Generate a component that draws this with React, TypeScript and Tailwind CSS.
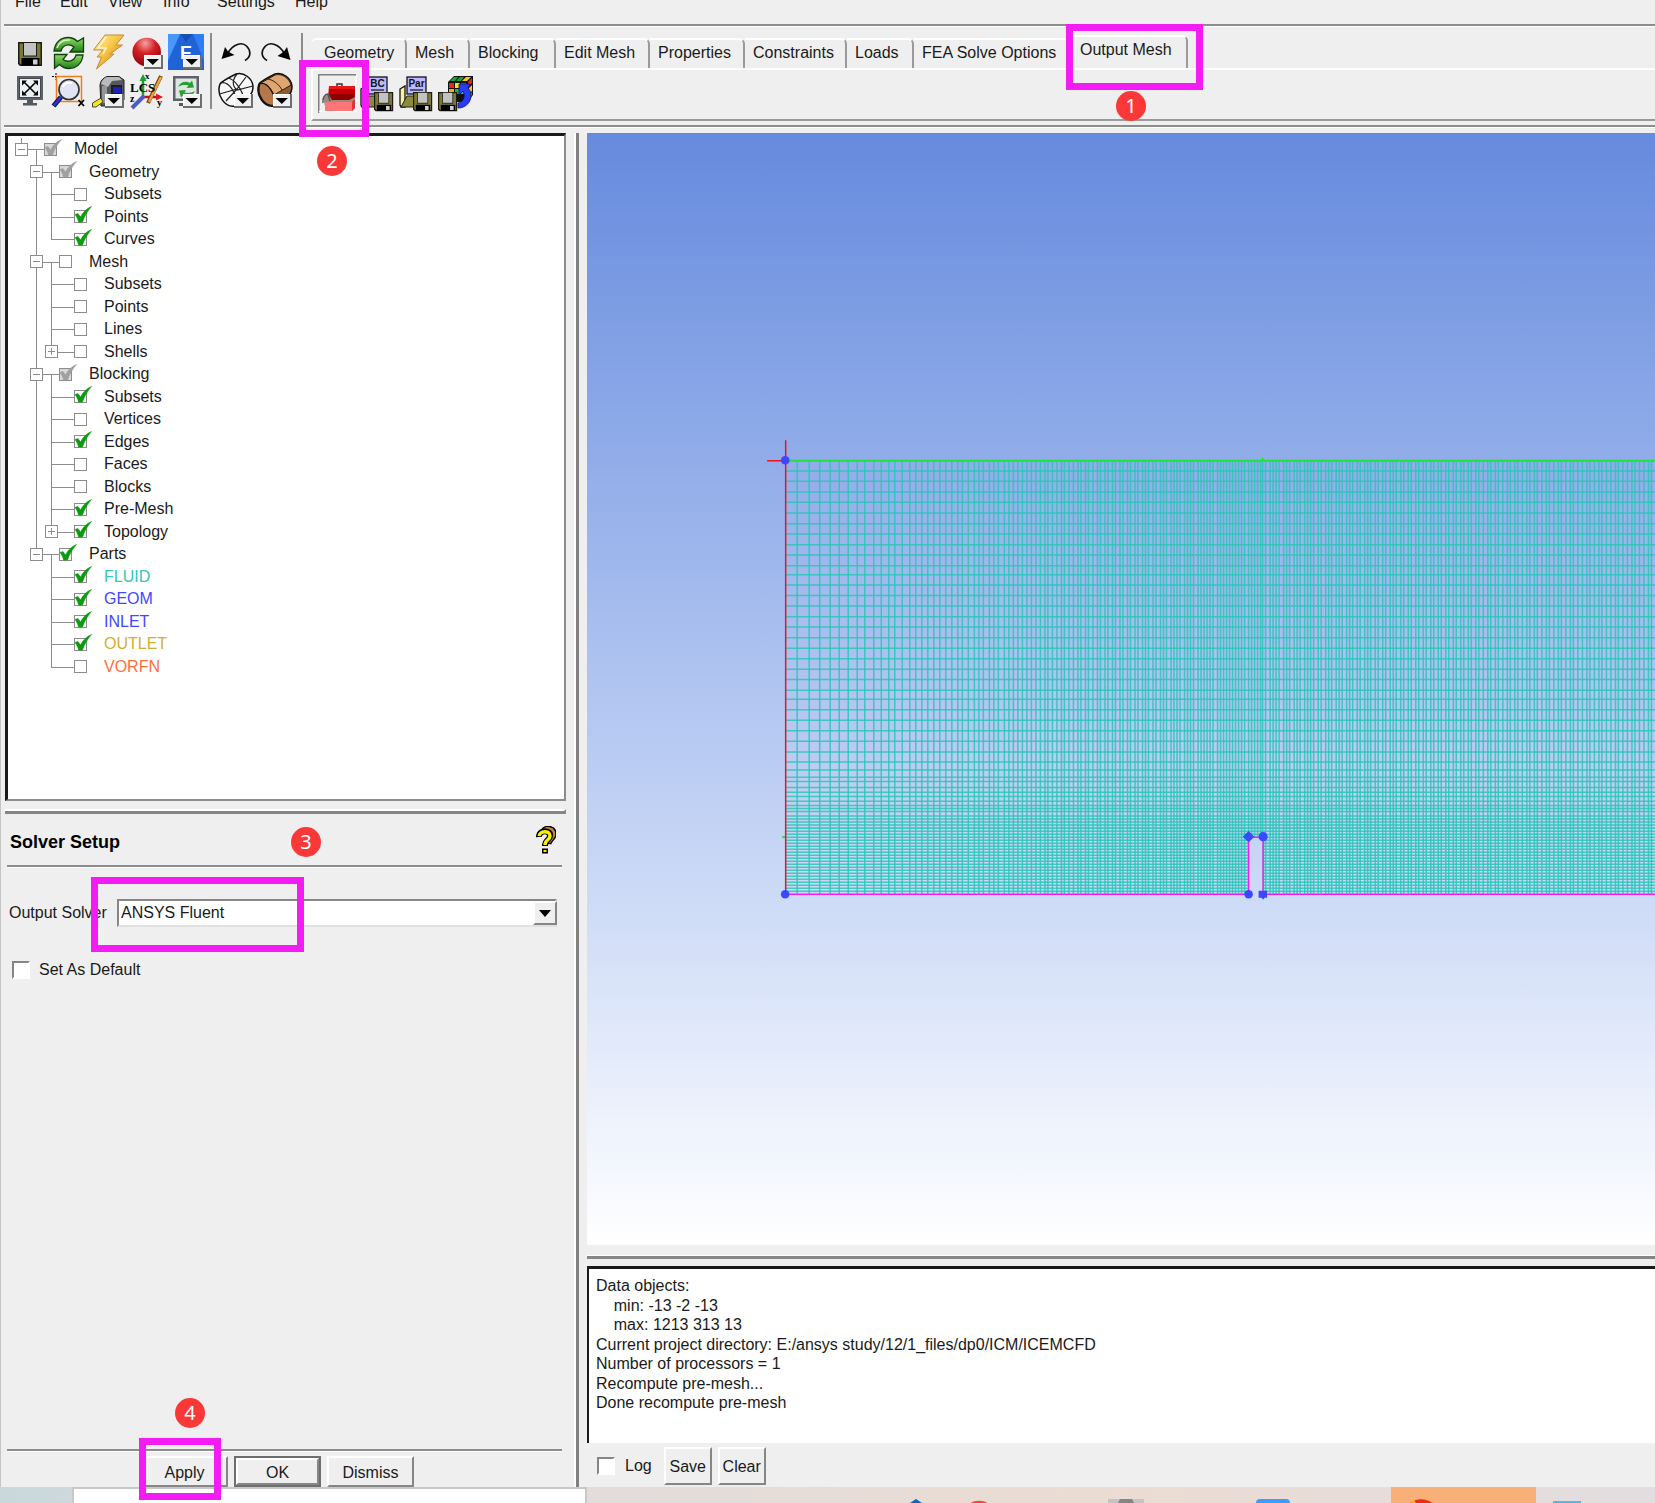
import type { ReactNode } from 'react';

/* ---------- toolbar drawings ---------- */

function Icon({ children }: { children: ReactNode }) {
  return (
    <svg viewBox="0 0 39 39" className="block size-[39px]" aria-hidden="true">
      {children}
    </svg>
  );
}

function DropBadge({ x = 17, y = 22 }: { x?: number; y?: number }) {
  return (
    <g transform={`translate(${x} ${y})`}>
      <rect width="19" height="14" fill="#6e6e6e" />
      <rect width="17" height="12" fill="#fff" />
      <rect x="1" y="1" width="16" height="11" fill="#f0f0f0" />
      <path d="M2.5 4H15L8.8 10Z" fill="#000" />
    </g>
  );
}

function Floppy({ x, y, s = 1 }: { x: number; y: number; s?: number }) {
  return (
    <g transform={`translate(${x} ${y}) scale(${s})`}>
      <path d="M0 0H24V24H2L0 22Z" fill="#1c1c10" />
      <path d="M1.5 1.5H22.5V22.5H3L1.5 21Z" fill="#7c7a3a" />
      <rect x="5" y="0.5" width="14" height="14" fill="#1c1c10" />
      <rect x="6" y="1" width="12" height="12.5" fill="#c3c3c3" />
      <rect x="3.5" y="16" width="18" height="7.5" fill="#000" />
      <rect x="15" y="17.5" width="4.5" height="5" fill="#d0d0d0" />
    </g>
  );
}

const SaveIcon = () => (
  <Icon>
    <Floppy x={8} y={9} />
  </Icon>
);

const RefreshIcon = () => (
  <Icon>
    <defs>
      <linearGradient id="rg" x1="0" y1="0" x2="0" y2="1">
        <stop offset="0" stopColor="#8fdc6a" />
        <stop offset="1" stopColor="#1f7d16" />
      </linearGradient>
    </defs>
    <path d="M5 18C6 9 12 4.500 19 4.500C23 4.500 26 6 28.500 8.500L34.500 5V19H21L25 14C20 10 13.500 12 12 18Z" fill="url(#rg)" stroke="#123f0c" strokeWidth="1.300" />
    <path d="M34 22C33 31 27 35.500 20 35.500C16 35.500 13 34 10.500 31.500L5.500 35.500V21.500H18L14 26.500C19 30 25.500 28 27 22Z" fill="url(#rg)" stroke="#123f0c" strokeWidth="1.300" />
    <path d="M8 15C10 9 15 6.500 21 7" stroke="#d4f7bd" strokeWidth="1.500" fill="none" />
  </Icon>
);

const BoltIcon = () => (
  <Icon>
    <defs>
      <linearGradient id="bg" x1="0" y1="0" x2="1" y2="1">
        <stop offset="0" stopColor="#fff3b0" />
        <stop offset="0.450" stopColor="#f9c542" />
        <stop offset="1" stopColor="#c96a14" />
      </linearGradient>
    </defs>
    <path d="M17 2H36L28 12H34.500L22 21H26L8.500 36L13.500 24H9L15 17H5.500Z" fill="url(#bg)" stroke="#c98a2e" strokeWidth="1" />
    <path d="M18 4L10 15H18L15 21" stroke="#fff6cf" strokeWidth="1.500" fill="none" />
  </Icon>
);

const StopIcon = () => (
  <Icon>
    <defs>
      <radialGradient id="sg" cx="0.450" cy="0.200" r="0.800">
        <stop offset="0" stopColor="#f7a0a0" />
        <stop offset="0.450" stopColor="#d41f24" />
        <stop offset="1" stopColor="#8e0508" />
      </radialGradient>
    </defs>
    <circle cx="19.700" cy="19" r="14.300" fill="url(#sg)" />
    <DropBadge />
  </Icon>
);

const EIcon = () => (
  <Icon>
    <rect x="2" y="1" width="36" height="36" fill="#2f7df0" />
    <path d="M14 1H27L38 28V37H2V28Z" fill="#1f63d6" />
    <path d="M14 1L2 27V1Z" fill="#4a97fb" />
    <path d="M14 1L20 9L27 1Z" fill="#1851b4" />
    <text x="14" y="26" fontFamily="Liberation Sans, sans-serif" fontWeight="bold" fontSize="18" fill="#fff">E</text>
    <DropBadge />
  </Icon>
);

const UndoIcon = () => (
  <Icon>
    <path d="M11 20C16 11 25 8.500 29.500 13C34 17.500 34.500 23.500 28 27.500" stroke="#111" strokeWidth="1.700" fill="none" />
    <path d="M4.500 26L8 14L11 18.500L17.500 22Z" fill="#000" />
  </Icon>
);

const RedoIcon = () => (
  <Icon>
    <path d="M28 20C23 11 14 8.500 9.500 13C5 17.500 4.500 23.500 11 27.500" stroke="#111" strokeWidth="1.700" fill="none" />
    <path d="M34.500 27L31 14L28 18.500L21.500 23Z" fill="#000" />
  </Icon>
);

const FitIcon = () => (
  <Icon>
    <rect x="7" y="4" width="26" height="24" fill="#5d6169" />
    <rect x="9.500" y="6.500" width="21" height="19" fill="#eceff2" stroke="#2e3136" strokeWidth="0.800" />
    <path d="M14 10L26 22M26 10L14 22" stroke="#000" strokeWidth="1.600" />
    <path d="M12 8.500H17L12 13.500ZM28 8.500V13.500L23 8.500ZM12 23.500V18.500L17 23.500ZM28 23.500H23L28 18.500Z" fill="#000" />
    <path d="M17 28H23V31H27V33.500H13V31H17Z" fill="#555960" />
  </Icon>
);

const ZoomIcon = () => (
  <Icon>
    <path d="M7 1V8M3 4.500H12" stroke="#000" strokeWidth="1" strokeDasharray="2 1" />
    <rect x="7.500" y="4.500" width="25" height="25" fill="none" stroke="#ef7d1c" strokeWidth="1.500" />
    <path d="M12 25L4.500 34" stroke="#151547" strokeWidth="5" />
    <path d="M12 25L5 33.500" stroke="#2a35e8" strokeWidth="2.500" />
    <circle cx="20" cy="17.500" r="10" fill="#dfe3f4" fillOpacity="0.950" stroke="#333" strokeWidth="1.700" />
    <path d="M14 15C15 11 19 10 23 11" stroke="#fff" strokeWidth="2" fill="none" />
    <path d="M29.500 28L35 34M35 28L29.500 34" stroke="#000" strokeWidth="1.800" />
  </Icon>
);

const MeasureIcon = () => (
  <Icon>
    <path d="M12 14C12 9 15 6 19 4.500H31L36 8V28L30 34H13Z" fill="#56595c" stroke="#222" strokeWidth="1" />
    <path d="M13 12C14 8 16 6 19 5H31L34 8L24 9L20 15Z" fill="#b8bbbd" />
    <path d="M14 14H19V31H14Z" fill="#93979a" />
    <rect x="23" y="13" width="11" height="9" fill="#1a1a2c" />
    <rect x="25" y="15" width="8" height="6" fill="#1d23b8" />
    <path d="M13 26L4.500 31V35H8L15 30Z" fill="#f5e420" stroke="#333" strokeWidth="0.900" />
    <DropBadge />
  </Icon>
);

const LcsIcon = () => (
  <Icon>
    <path d="M16 25V5" stroke="#18a22c" strokeWidth="2.500" />
    <path d="M12.500 9L16 2L19.500 9Z" fill="#18a22c" />
    <path d="M16 25H31" stroke="#c51320" strokeWidth="2.500" />
    <path d="M29 21.500L36 25L29 28.500Z" fill="#e01b28" />
    <path d="M17 24L5 36" stroke="#4c59c8" strokeWidth="4" />
    <path d="M34 4L21 31" stroke="#7d4310" strokeWidth="4" />
    <path d="M34 5L22 30" stroke="#f2a43c" strokeWidth="2.300" />
    <g fontFamily="Liberation Serif, serif" fontWeight="bold" fill="#000">
      <text x="3" y="20" fontSize="13">LCS</text>
      <text x="18" y="7" fontSize="9">x</text>
      <text x="30" y="34" fontSize="10">y</text>
      <text x="3" y="30" fontSize="10">z</text>
    </g>
  </Icon>
);

const RedrawIcon = () => (
  <Icon>
    <rect x="7" y="4" width="26" height="25" fill="#5d6169" />
    <rect x="9.500" y="6.500" width="21" height="20" fill="#dfe5e2" />
    <path d="M12 15C14 10 20 8.500 24 11L26 8.500L28 15.500L20.500 16L22.500 13.500C19 12.500 15 13 12 15Z" fill="#26a12f" />
    <path d="M29 19C27 24 21 25.500 17 23L15 25.500L13 18.500L20 18L18.500 20.500C22 21.500 26 21 29 19Z" fill="#26a12f" />
    <path d="M17 29H22V31H25V34H13V31H17Z" fill="#555960" />
    <DropBadge />
  </Icon>
);

const WireframeIcon = () => (
  <Icon>
    <path d="M3 12C5 9 15 4 19 2C27 0 35 6 36 14C36 19 35 21 33 23L18 34C8 36 -1 23 3 12Z" fill="#f7f7f7" stroke="#111" strokeWidth="1.500" />
    <path d="M4 11C11 9 21 21 19 34M20 2C15 8 15 14 20 18L36 14M11 6C17 7 25 17 27 27M2.500 22L20 17L29 5M9 29L20 17" stroke="#222" strokeWidth="1.200" fill="none" />
    <DropBadge />
  </Icon>
);

const SolidIcon = () => (
  <Icon>
    <path d="M3 12C5 9 15 4 19 2C27 0 35 6 36 14C36 19 35 21 33 23L18 34C8 36 -1 23 3 12Z" fill="#8f5a30" stroke="#111" strokeWidth="1.500" />
    <path d="M5 11L19 3C26 1 33 6 35 13L18 23C15 16 10 12 5 11Z" fill="#dfa672" stroke="#33200f" strokeWidth="1" />
    <path d="M4 11.500C12 10 20 22 18 33C9 35 0 23 4 11.500Z" fill="#b57848" stroke="#111" strokeWidth="1.200" />
    <path d="M12 7C17 8 23 12 26 18" stroke="#33200f" strokeWidth="1" fill="none" />
    <DropBadge />
  </Icon>
);

const ToolboxIcon = () => (
  <Icon>
    <path d="M0 39V0H38" fill="none" stroke="#808080" strokeWidth="3" />
    <path d="M1 37.500H38V2" fill="none" stroke="#fff" strokeWidth="1.500" />
    <path d="M19 12V10H24V12" stroke="#333" strokeWidth="1.500" fill="none" />
    <path d="M11 12H37V26L34 28H12L10 24Z" fill="#c80000" />
    <path d="M12 20H36V26L33 28H14Z" fill="#8e0000" />
    <path d="M11 12H37V15H11Z" fill="#e41a1a" />
    <path d="M5 24L10 20L14 26H31L37 23V29L33 32H7Z" fill="#9a8a82" />
    <path d="M5 29C4 24 7 20 10 20L12 27" fill="none" stroke="#555" strokeWidth="1.500" />
    <path d="M7 28H34L37 25V34L34 37H7Z" fill="#ff7676" />
    <path d="M34 28L37 25V34L34 37Z" fill="#e03434" />
  </Icon>
);

function FolderSave({ label }: { label: string }) {
  return (
    <Icon>
      <path d="M5 15L10 12V33H6L5 31Z" fill="#f5f2a0" stroke="#111" strokeWidth="1.300" />
      <path d="M6 33L12 22H25V33Z" fill="#8d8a3a" stroke="#222" strokeWidth="1" />
      <rect x="12" y="3" width="19" height="17" fill="#bcb8ff" stroke="#111" strokeWidth="1.300" />
      <text x="21.500" y="13" textAnchor="middle" fontFamily="Liberation Sans, sans-serif" fontWeight="bold" fontSize="10" fill="#111">{label}</text>
      <path d="M15 16H28" stroke="#111" strokeWidth="1.200" />
      <Floppy x={18} y={18} s={0.8} />
    </Icon>
  );
}

const CubeIcon = () => (
  <Icon>
    <path d="M14 8L20 2H39V21L33 28H14Z" fill="#111" />
    <g transform="translate(0 -1)">
      <rect x="15" y="10" width="5" height="5" fill="#e52a12" />
      <rect x="21" y="10" width="5" height="5" fill="#f3e21b" />
      <rect x="27" y="10" width="5" height="5" fill="#24b63a" />
      <rect x="15" y="16" width="5" height="5" fill="#f3b21b" />
      <rect x="21" y="16" width="5" height="5" fill="#24b63a" />
      <rect x="27" y="16" width="5" height="5" fill="#19b4b8" />
      <rect x="15" y="22" width="5" height="5" fill="#24b63a" />
      <path d="M16 8L20 4H24L21 8ZM22 8L26 4H30L27 8Z" fill="#19a23c" />
      <path d="M28 8L32 4H37L33 8Z" fill="#f3c81b" />
      <path d="M34 9L38 5V10L34 14Z" fill="#e52a12" />
      <path d="M34 16L38 12V18L34 21Z" fill="#f3c81b" />
      <path d="M34 23L38 19V22L34 27Z" fill="#24b63a" />
    </g>
    <path d="M24 34C35 34 41 22 34 14L36 10H25V21L29 17C32 23 29 28 24 29Z" fill="#2b3cf5" stroke="#0a0f66" strokeWidth="0.800" />
    <Floppy x={4} y={18} s={0.8} />
  </Icon>
);

const HelpIcon = () => (
  <svg viewBox="0 0 20 28" className="block h-7 w-5" aria-hidden="true">
    <path d="M7 5C9 0 18.500 1 18.500 8C18.500 13 14 13 13 18" fill="none" stroke="#000" strokeWidth="4.500" />
    <path d="M7 5C9 0.500 18 1.500 18 8C18 13 14 13 13 17" fill="none" stroke="#c9823c" strokeWidth="2.500" />
    <path d="M3 11C2.500 4 14 3 14 10C14 14 9 13.500 9 20" fill="none" stroke="#000" strokeWidth="6" />
    <path d="M3.200 10C3.500 4.500 14 4 14 10C14 14 9 13.500 9 19" fill="none" stroke="#f8f000" strokeWidth="3.400" />
    <rect x="6" y="22.500" width="6" height="5" fill="#000" />
    <rect x="7.500" y="24" width="3" height="2" fill="#f8f000" />
  </svg>
);

/* ---------- call-outs ---------- */

const Badge = ({ n, className }: { n: number; className: string }) => (
  <span className={`absolute z-20 flex size-[30px] items-center justify-center rounded-full bg-[#fb3838] font-['Noto_Sans'] text-[20px] leading-none text-white ${className}`}>
    {n}
  </span>
);

const Mark = ({ className }: { className: string }) => (
  <span className={`pointer-events-none absolute z-10 border-[7px] border-[#f41cf4] ${className}`} />
);

/* ---------- model tree ---------- */

type Row = {
  label: string;
  level: 0 | 1 | 2;
  check: 'on' | 'off' | 'mixed';
  sign?: '-' | '+';
  last?: boolean;
  trunk?: boolean;
  tone?: string;
};

const rows: Row[] = [
  { label: 'Model', level: 0, check: 'mixed', sign: '-', last: true },
  { label: 'Geometry', level: 1, check: 'mixed', sign: '-' },
  { label: 'Subsets', level: 2, check: 'off', trunk: true },
  { label: 'Points', level: 2, check: 'on', trunk: true },
  { label: 'Curves', level: 2, check: 'on', trunk: true, last: true },
  { label: 'Mesh', level: 1, check: 'off', sign: '-' },
  { label: 'Subsets', level: 2, check: 'off', trunk: true },
  { label: 'Points', level: 2, check: 'off', trunk: true },
  { label: 'Lines', level: 2, check: 'off', trunk: true },
  { label: 'Shells', level: 2, check: 'off', trunk: true, sign: '+', last: true },
  { label: 'Blocking', level: 1, check: 'mixed', sign: '-' },
  { label: 'Subsets', level: 2, check: 'on', trunk: true },
  { label: 'Vertices', level: 2, check: 'off', trunk: true },
  { label: 'Edges', level: 2, check: 'on', trunk: true },
  { label: 'Faces', level: 2, check: 'off', trunk: true },
  { label: 'Blocks', level: 2, check: 'off', trunk: true },
  { label: 'Pre-Mesh', level: 2, check: 'on', trunk: true },
  { label: 'Topology', level: 2, check: 'on', trunk: true, sign: '+', last: true },
  { label: 'Parts', level: 1, check: 'on', sign: '-', last: true },
  { label: 'FLUID', level: 2, check: 'on', tone: 'text-[#34c6b8]' },
  { label: 'GEOM', level: 2, check: 'on', tone: 'text-[#4048ff]' },
  { label: 'INLET', level: 2, check: 'on', tone: 'text-[#4048ff]' },
  { label: 'OUTLET', level: 2, check: 'on', tone: 'text-[#d0b030]' },
  { label: 'VORFN', level: 2, check: 'off', tone: 'text-[#ff7038]', last: true },
];

const line = 'absolute bg-[#8c8c8c]';

function TreeRow({ row }: { row: Row }) {
  const { level, sign, last, trunk, check, label, tone } = row;
  return (
    <li className="flex flex-1 items-center">
      {level > 0 && <span className="w-[15px]" />}
      {level > 1 && (
        <span className="relative w-[15px] self-stretch">
          {trunk && <span className={`${line} left-[7px] h-full w-px`} />}
        </span>
      )}
      <span className="relative flex w-[15px] items-center justify-center self-stretch">
        <span className={`${line} top-0 left-[7px] w-px ${last ? 'h-1/2' : 'h-full'}`} />
        <span className={`${line} top-1/2 left-[7px] h-px w-2`} />
        {sign && (
          <button
            aria-label={`${sign === '-' ? 'Collapse' : 'Expand'} ${label}`}
            className="relative size-[13px] border border-[#8c8c8c] bg-white"
          >
            <span className={`${line} top-[5px] left-[2px] h-px w-[7px]`} />
            {sign === '+' && <span className={`${line} top-[2px] left-[5px] h-[7px] w-px`} />}
          </button>
        )}
      </span>
      <span className="relative w-[15px] self-stretch">
        <span className={`${line} top-1/2 left-0 h-px w-full`} />
        {sign === '-' && <span className={`${line} top-1/2 left-[7px] h-1/2 w-px`} />}
      </span>
      <label className="flex items-center">
        <span className="relative mr-[17px] size-[13px]">
          <input
            type="checkbox"
            defaultChecked={check !== 'off'}
            className={`block size-[13px] appearance-none border border-[#8c8c8c] ${check === 'mixed' ? 'bg-[#d8d8d8]' : 'bg-white'}`}
          />
          {check !== 'off' && (
            <svg viewBox="0 0 18 17" className="absolute bottom-0 left-0 h-[17px] w-[18px]" aria-hidden="true">
              <path
                d="M1 8.500L4 7.500L6.500 11C9 6 12.500 2.500 17.500 0.500C13.500 5 10.500 10 8.500 16H4.500C4 13 2.500 10.500 1 8.500Z"
                fill={check === 'on' ? '#0a9c0e' : '#a0a0a0'}
                stroke={check === 'on' ? '#0a9c0e' : '#a0a0a0'}
                strokeWidth="0.600"
              />
            </svg>
          )}
        </span>
        <span className={tone ?? 'text-[#1a1a1a]'}>{label}</span>
      </label>
    </li>
  );
}

/* ---------- mesh view ---------- */

const CELL = 1.5;
const snap = (v: number) => Math.round(v / CELL) * CELL;

function meshColumns() {
  const steps = [
    0, 8, 8, 7, 7, 6, 6, 6, 5, 6, 5, 5, 4, 5, 5, 4, 4, 4, 4, 4, 4, 4, 4, 3, 4, 4, 3, 3, 4, 3, 3, 4, 3, 3, 3, 3, 3, 3, 3, 3,
    3, 2, 3, 3,
  ];
  const out: number[] = [];
  let x = 198;
  for (const s of steps) {
    x += s * CELL;
    out.push(x);
  }
  while (x < 656) {
    x += 4.1 - ((x - 470) / 190) * 1.1;
    out.push(snap(x));
  }
  out.push(661, 664, 667, 670, 673, 675);
  x = 675;
  while (x < 1068) {
    x += 3.4 + ((x - 675) / 393) * 0.8;
    out.push(snap(x));
  }
  return out;
}

function meshRows() {
  const marks = [
    125, 156, 188, 219, 251, 283, 314, 346, 377, 409, 436, 467, 498, 530, 562, 593, 625, 656, 688, 719, 750, 782, 809,
    841, 872, 904, 935, 967, 997, 1021, 1043, 1056, 1074, 1088, 1101, 1115, 1128, 1137, 1146,
  ];
  const out = marks.map((m) => 296 + m / 3);
  for (let y = 682.5; y < 760; y += 3) out.push(y);
  return out;
}

const columns = meshColumns();
const lines = meshRows();

function MeshView() {
  return (
    <svg viewBox="0 0 1068 1111" preserveAspectRatio="xMinYMin slice" className="absolute inset-0 h-full w-full" role="img" aria-label="Mesh">
      <clipPath id="fluid">
        <path clipRule="evenodd" d="M198 327H1068V761H198ZM661 703H675V761H661Z" />
      </clipPath>
      <g clipPath="url(#fluid)" stroke="#2cc4b8" strokeWidth="1.500">
        <path d={columns.map((x) => `M${x} 327V761`).join('')} strokeOpacity="0.850" />
        <path d={lines.map((y) => `M198 ${y}H1068`).join('')} strokeOpacity="0.850" />
      </g>
      <path d="M198 327.500H1068" stroke="#22e040" strokeWidth="2" />
      <path d="M674 325.500H676" stroke="#00ff00" strokeWidth="2" />
      <path d="M195 703.500H198" stroke="#22e040" strokeWidth="2" />
      <path d="M198.500 307V761M180 327.500H198" stroke="#ee1122" strokeWidth="1.500" />
      <path d="M198 760.500H661V703.500H675.500V760.500H1068" fill="none" stroke="#f41cf4" strokeWidth="1.500" />
      <g fill="#3c48ff">
        <circle cx="198" cy="327" r="4.300" />
        <circle cx="198" cy="760.500" r="4.300" />
        <path d="M656 703L661 698L666 703L661 708Z" stroke="#3c48ff" />
        <circle cx="675.500" cy="703" r="4.600" />
        <circle cx="661" cy="760.500" r="4.300" />
        <path d="M671 757H679.500V764H677L675.500 766L674 764H671Z" />
      </g>
    </svg>
  );
}

/* ---------- page ---------- */

const menu: [string, string][] = [
  ['File', 'w-[45px]'],
  ['Edit', 'w-12'],
  ['View', 'w-[55px]'],
  ['Info', 'w-[54px]'],
  ['Settings', 'w-[78px]'],
  ['Help', 'w-12'],
];

const tabs: [string, string][] = [
  ['Geometry', 'w-24 pl-[13px]'],
  ['Mesh', 'w-[63px] pl-2'],
  ['Blocking', 'w-[86px] pl-2'],
  ['Edit Mesh', 'w-[94px] pl-2'],
  ['Properties', 'w-[95px] pl-2'],
  ['Constraints', 'w-[102px] pl-2'],
  ['Loads', 'w-[67px] pl-2'],
  ['FEA Solve Options', 'w-[154px] pl-2'],
];

const mainTools: [string, () => ReactNode][][] = [
  [
    ['Save', SaveIcon],
    ['Refresh', RefreshIcon],
    ['Run', BoltIcon],
    ['Stop', StopIcon],
    ['Export', EIcon],
  ],
  [
    ['Fit window', FitIcon],
    ['Box zoom', ZoomIcon],
    ['Measure', MeasureIcon],
    ['Local coordinates', LcsIcon],
    ['Redraw', RedrawIcon],
  ],
];

const viewTools: [string, () => ReactNode][][] = [
  [
    ['Undo', UndoIcon],
    ['Redo', RedoIcon],
  ],
  [
    ['Wireframe', WireframeIcon],
    ['Solid', SolidIcon],
  ],
];

function ToolGrid({ tools }: { tools: [string, () => ReactNode][][] }) {
  return (
    <div>
      {tools.map((r, i) => (
        <div key={i} className="flex">
          {r.map(([name, Glyph]) => (
            <button key={name} aria-label={name}>
              <Glyph />
            </button>
          ))}
        </div>
      ))}
    </div>
  );
}

const raised = 'border-2 border-t-white border-l-white border-r-[#868686] border-b-[#868686] bg-[#efefef]';
const sunkenBox =
  'appearance-none border-2 border-t-[#868686] border-l-[#868686] border-r-white border-b-white bg-white size-[18px]';
const rule = 'h-[3px] border-t-2 border-b border-t-[#8c8c8c] border-b-white';

const log = [
  'Data objects:',
  '    min: -13 -2 -13',
  '    max: 1213 313 13',
  'Current project directory: E:/ansys study/12/1_files/dp0/ICM/ICEMCFD',
  'Number of processors = 1',
  'Recompute pre-mesh...',
  'Done recompute pre-mesh',
];

export default function App() {
  return (
    <div className="flex h-screen flex-col overflow-hidden bg-[#efefef] font-['Liberation_Sans',Arial,sans-serif] text-[16px] leading-5 text-[#1a1a1a]">
      <div className="flex min-h-0 flex-1 flex-col border-l border-[#c4c4c4]">
        <nav className="flex h-6 shrink-0 items-start overflow-hidden pl-[14px]">
          {menu.map(([name, width]) => (
            <button key={name} className={`-mt-2 shrink-0 text-left ${width}`}>
              {name}
            </button>
          ))}
        </nav>
        <div className={`ml-[3px] shrink-0 ${rule}`} />

        <header className="flex h-[98px] shrink-0">
          <div className="flex pt-[6px] pl-[9px]">
            <ToolGrid tools={mainTools} />
            <div className="mx-[5px] h-[76px] w-[2px] bg-[#8c8c8c]" />
            <ToolGrid tools={viewTools} />
            <div className="ml-[6px] h-[76px] w-[2px] bg-[#8c8c8c]" />
          </div>
          <div className="ml-2 flex min-w-0 flex-1 flex-col pt-2">
            <div className="flex h-[33px] shrink-0 items-end">
              {tabs.map(([name, look], i) => (
                <button
                  key={name}
                  className={`h-[30px] shrink-0 border-t-2 border-white pb-[2px] text-left whitespace-nowrap ${look} ${
                    i < 7 ? 'rounded-tr-md border-r-2 border-r-[#9a9a9a]' : ''
                  } ${i === 0 ? 'rounded-tl-md' : ''}`}
                >
                  {name}
                </button>
              ))}
              <div className="relative">
                <button className="h-[33px] w-[120px] rounded-tr-md border-t-2 border-r-2 border-t-white border-r-[#9a9a9a] pb-[6px] pl-[12px] text-left whitespace-nowrap">
                  Output Mesh
                </button>
                <Mark className="-top-[11px] -left-[2px] h-[66px] w-[137px]" />
                <Badge n={1} className="top-[56px] left-[48px]" />
              </div>
            </div>
            <div className="flex h-[53px] shrink-0 border-t-2 border-b-2 border-l-2 border-t-white border-b-[#9a9a9a] border-l-white pt-1 pl-[5px]">
              <div className="relative">
                <button aria-label="Select solver">
                  <ToolboxIcon />
                </button>
                <Mark className="-top-[14px] -left-[19px] h-[77px] w-[70px]" />
                <Badge n={2} className="top-[72px] -left-[1px]" />
              </div>
              <button aria-label="Boundary conditions" className="-ml-[1px] self-start">
                <FolderSave label="BC" />
              </button>
              <button aria-label="Edit parameters" className="self-start">
                <FolderSave label="Par" />
              </button>
              <button aria-label="Write input" className="self-start">
                <CubeIcon />
              </button>
            </div>
          </div>
        </header>
        <div className={`ml-[3px] shrink-0 ${rule}`} />

        <main className="flex min-h-0 flex-1">
          <aside className="flex w-[573px] shrink-0 flex-col pt-[5px] pl-1">
            <div className="mr-2 h-[668px] shrink-0 border-t-[3px] border-r-2 border-b-2 border-l-[3px] border-t-[#1a1a1a] border-r-[#8c8c8c] border-b-[#8c8c8c] border-l-[#1a1a1a] bg-white pt-[2px] pl-[6px]">
              <ul className="flex h-[540px] flex-col">
                {rows.map((r, i) => (
                  <TreeRow key={i} row={r} />
                ))}
              </ul>
            </div>
            <div className="mt-2 mr-2 h-[5px] shrink-0 border-t-2 border-r-2 border-b-[3px] border-t-white border-r-[#868686] border-b-[#868686]" />

            <section className="flex min-h-0 flex-1 flex-col pr-3 pl-[2px]">
              <div className="relative flex h-[51px] shrink-0 items-center justify-between pt-1 pr-[6px] pl-[3px]">
                <h2 className="text-[18px] font-bold text-black">Solver Setup</h2>
                <button aria-label="Help" className="-mt-1">
                  <HelpIcon />
                </button>
                <Badge n={3} className="top-[13px] left-[284px]" />
              </div>
              <div className={`shrink-0 ${rule}`} />
              <div className="relative mt-[31px] flex h-7 shrink-0 items-center pl-[2px]">
                <label htmlFor="solver" className="w-[108px] shrink-0">
                  Output Solver
                </label>
                <div className="relative mr-[5px] flex-1">
                  <select
                    id="solver"
                    className="block h-7 w-full appearance-none border-2 border-t-[#868686] border-r-[#e0e0e0] border-b-[#e0e0e0] border-l-[#868686] bg-white pl-[2px] text-[16px]"
                  >
                    <option>ANSYS Fluent</option>
                  </select>
                  <span className={`pointer-events-none absolute top-[2px] right-0 flex h-6 w-6 items-center justify-center ${raised}`}>
                    <svg viewBox="0 0 12 7" className="h-[7px] w-3" aria-hidden="true">
                      <path d="M0 0H12L6 7Z" fill="#000" />
                    </svg>
                  </span>
                </div>
                <Mark className="-top-[22px] left-[84px] h-[75px] w-[213px]" />
              </div>
              <label className="mt-[33px] flex shrink-0 items-center gap-[9px] pl-[5px]">
                <input type="checkbox" className={sunkenBox} />
                Set As Default
              </label>
              <div className="flex-1" />
              <div className={`shrink-0 ${rule}`} />
              <div className="relative mt-1 flex h-[31px] shrink-0 pl-[134px]">
                <button className={`mr-[6px] w-[87px] pt-[2px] ${raised}`}>Apply</button>
                <span className="mr-[6px] flex w-[87px] border-2 border-[#6e6e6e]">
                  <button className={`flex-1 pt-[2px] ${raised}`}>OK</button>
                </span>
                <button className={`w-[87px] pt-[2px] ${raised}`}>Dismiss</button>
                <Mark className="-top-[18px] left-[132px] z-20 h-[62px] w-[82px]" />
                <Badge n={4} className="-top-[58px] left-[168px]" />
              </div>
            </section>
          </aside>

          <div className="mt-[5px] w-[5px] shrink-0 border-r-[3px] border-l-2 border-r-[#808080] border-l-white" />

          <div className="ml-2 flex min-w-0 flex-1 flex-col pt-[5px]">
            <div className="relative min-h-0 flex-1 bg-linear-to-b from-[#668add] to-white">
              <MeshView />
            </div>
            <div className="mt-[10px] h-[4px] shrink-0 border-t border-b-[3px] border-t-white border-b-[#868686]" />
            <div className="mt-[7px] h-[177px] shrink-0 border-t-[3px] border-l-2 border-[#1a1a1a] bg-white pt-[7px] pl-[7px]">
              <div className="flex h-[137px] flex-col leading-[19px]" role="log">
                {log.map((t) => (
                  <p key={t} className="flex-1 whitespace-pre">
                    {t}
                  </p>
                ))}
              </div>
            </div>
            <div className="flex h-11 shrink-0 items-center pt-[2px] pl-[10px]">
              <label className="flex items-center gap-[10px]">
                <input type="checkbox" className={sunkenBox} />
                Log
              </label>
              <button className={`ml-3 h-[38px] w-12 pt-[2px] ${raised}`}>Save</button>
              <button className={`ml-[6px] h-[38px] w-12 pt-[2px] ${raised}`}>Clear</button>
            </div>
          </div>
        </main>
      </div>

      <footer className="flex h-4 shrink-0 items-end overflow-hidden bg-linear-to-r from-[#cad8dd] via-[#e8dcd6] to-[#e0dce0]">
        <div className="ml-[72px] h-4 w-[515px] border-x-2 border-t-2 border-[#c8c8c8] bg-white" />
        <div className="flex h-4 flex-1 items-end bg-linear-to-r from-[#e2dcdb] via-[#ecdcd3] to-[#e2dde0]">
          <svg viewBox="0 0 240 4" className="ml-[320px] h-1 w-[240px]" aria-hidden="true">
            <path d="M3 4L9 0L15 4Z" fill="#0a66c2" />
            <path d="M64 4C67 1 77 1 80 4Z" fill="#e84b3c" />
            <rect x="201" width="36" height="4" fill="#c4c4c4" />
            <path d="M213 0H225L227 4H211Z" fill="#858585" />
          </svg>
          <span className="ml-[109px] h-1 w-[34px] rounded-t-md bg-[#3d9cff]" />
          <span className="ml-[101px] flex h-4 w-[145px] items-end bg-[#f9b078] pl-[19px]">
            <svg viewBox="0 0 22 4" className="h-1 w-[22px]" aria-hidden="true">
              <path d="M0 4C6 -1 16 -1 22 4Z" fill="#ee2c12" />
              <path d="M0 4L4 1L6 4Z" fill="#f2b81b" />
            </svg>
          </span>
          <span className="ml-[17px] h-[2px] w-7 bg-[#52b4f2]" />
        </div>
      </footer>
    </div>
  );
}
